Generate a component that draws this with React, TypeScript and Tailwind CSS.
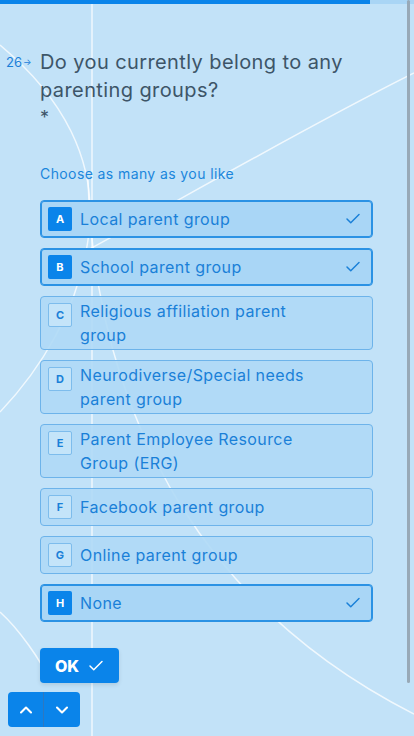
import { Check, ChevronUp, ChevronDown } from 'lucide-react';

interface Choice {
  key: string;
  label: string;
  selected: boolean;
}

const choices: Choice[] = [
  { key: 'A', label: 'Local parent group', selected: true },
  { key: 'B', label: 'School parent group', selected: true },
  { key: 'C', label: 'Religious affiliation parent group', selected: false },
  { key: 'D', label: 'Neurodiverse/Special needs parent group', selected: false },
  { key: 'E', label: 'Parent Employee Resource Group (ERG)', selected: false },
  { key: 'F', label: 'Facebook parent group', selected: false },
  { key: 'G', label: 'Online parent group', selected: false },
  { key: 'H', label: 'None', selected: true },
];

function Backdrop() {
  return (
    <svg className="pointer-events-none absolute inset-0" width="414" height="736" viewBox="0 0 414 736" fill="none">
      <g stroke="#ffffff" strokeOpacity="0.75" strokeWidth="1.5">
        <line x1="92" y1="0" x2="92" y2="736" />
        <path d="M0 45 C 60 95, 100 160, 88 240 C 78 310, 40 370, 0 412" />
        <path d="M88 180 C 95 400, 190 600, 414 714" />
        <path d="M414 73 C 300 130, 180 200, 88 250" />
        <path d="M0 612 C 20 630, 40 660, 50 680" />
      </g>
    </svg>
  );
}

function ChoiceRow({ choice }: { choice: Choice }) {
  return (
    <div
      className={`flex min-h-[38px] items-start rounded-[4px] border py-[2px] pl-[7px] pr-[10px] ${
        choice.selected
          ? 'border-[#2b92e4] bg-[#a9d6f6] shadow-[inset_0_0_0_1px_#2b92e4]'
          : 'border-[#6db3ea] bg-[#afd9f6]/90'
      }`}
    >
      <div
        className={`mt-[4px] flex h-6 w-6 shrink-0 items-center justify-center rounded-[2px] text-[11px] font-bold tracking-normal ${
          choice.selected
            ? 'bg-[#0a84ea] text-white'
            : 'border border-[#7dbcec] bg-[#c4e4f9] text-[#1a80d8]'
        }`}
      >
        {choice.key}
      </div>
      <div className="ml-2 flex min-h-[32px] flex-1 items-center pr-8 text-[16px] leading-6 text-[#1a80d8]">
        {choice.label}
      </div>
      {choice.selected && (
        <Check className="mt-[7px] h-[18px] w-[18px] shrink-0 text-[#1a80d8]" strokeWidth={2} />
      )}
    </div>
  );
}

export default function App() {
  return (
    <div
      className="relative h-[736px] w-[414px] overflow-hidden bg-[#c2e2f8] tracking-[0.025em]"
      style={{ fontFamily: 'Inter, "Noto Sans", sans-serif' }}
    >
      <Backdrop />

      <div className="relative flex h-1">
        <div className="w-[370px] bg-[#0a84ea]" />
        <div className="flex-1 bg-[#a9d5f5]" />
      </div>

      <div className="absolute right-[4px] top-0 h-[683px] w-[3px] rounded-full bg-[#98a9b7]" />

      <div className="relative pl-[6px] pr-[41px] pt-[44px]">
        <div className="flex">
          <div className="flex w-[34px] items-start pt-[6px] text-[13px] leading-4 tracking-normal text-[#1a80d8]">
            26<span className="ml-[1px] text-[9px] leading-4">→</span>
          </div>
          <div className="flex-1 text-[20px] leading-7 text-[#3d5568]">
            Do you currently belong to any parenting groups?
            <div className="mt-[2px] text-[18px] leading-6">*</div>
          </div>
        </div>

        <div className="ml-[34px] mt-[34px] text-[14px] leading-5 text-[#1a86dc]">Choose as many as you like</div>

        <div className="ml-[34px] mt-[16px] flex flex-col gap-[10px]">
          {choices.map((c) => (
            <ChoiceRow key={c.key} choice={c} />
          ))}
        </div>

        <button className="ml-[34px] mt-[26px] flex h-[35px] items-center gap-2 rounded-[4px] bg-[#0a84ea] pl-[15px] pr-[14px] text-[16px] font-extrabold tracking-normal text-white shadow-[0_2px_4px_rgba(0,0,0,0.1)]">
          OK
          <Check className="h-[18px] w-[18px]" strokeWidth={2} />
        </button>
      </div>

      <div className="absolute bottom-[9px] left-2 flex h-[35px] overflow-hidden rounded-[4px] bg-[#0a84ea]">
        <button className="flex w-[36px] items-center justify-center border-r border-[#2e78c0] text-white">
          <ChevronUp className="h-5 w-5" strokeWidth={2.5} />
        </button>
        <button className="flex w-[36px] items-center justify-center text-white">
          <ChevronDown className="h-5 w-5" strokeWidth={2.5} />
        </button>
      </div>
    </div>
  );
}
